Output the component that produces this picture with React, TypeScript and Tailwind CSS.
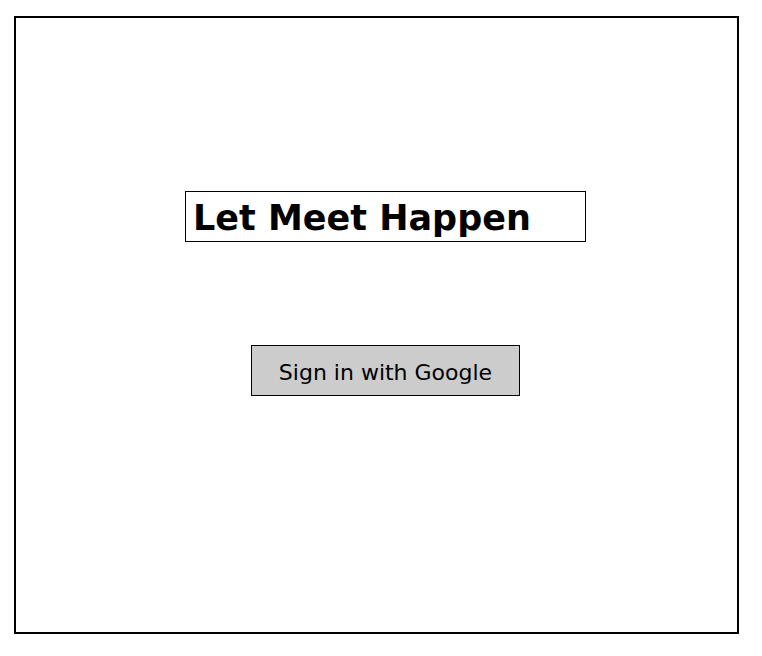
const font = { fontFamily: '"Comic Sans MS", "DejaVu Sans", sans-serif' };

const App = () => {
  return (
    <div className="w-[762px] h-[656px] bg-white pt-4 pl-[14px]" style={font}>
      <div className="w-[725px] h-[618px] border-2 border-black flex flex-col">
        <div className="mt-[173px] ml-[169px] w-[401px] h-[51px] border border-black flex items-center pl-[7px] pt-[3px]">
          <h1 className="text-[35px] font-bold text-black leading-none">Let Meet Happen</h1>
        </div>
        <div className="mt-[103px] ml-[235px]">
          <button className="w-[269px] h-[51px] bg-[#cccccc] border border-black text-[22px] text-black flex items-center justify-center pt-[3px]">
            Sign in with Google
          </button>
        </div>
      </div>
    </div>
  );
};

export default App;
